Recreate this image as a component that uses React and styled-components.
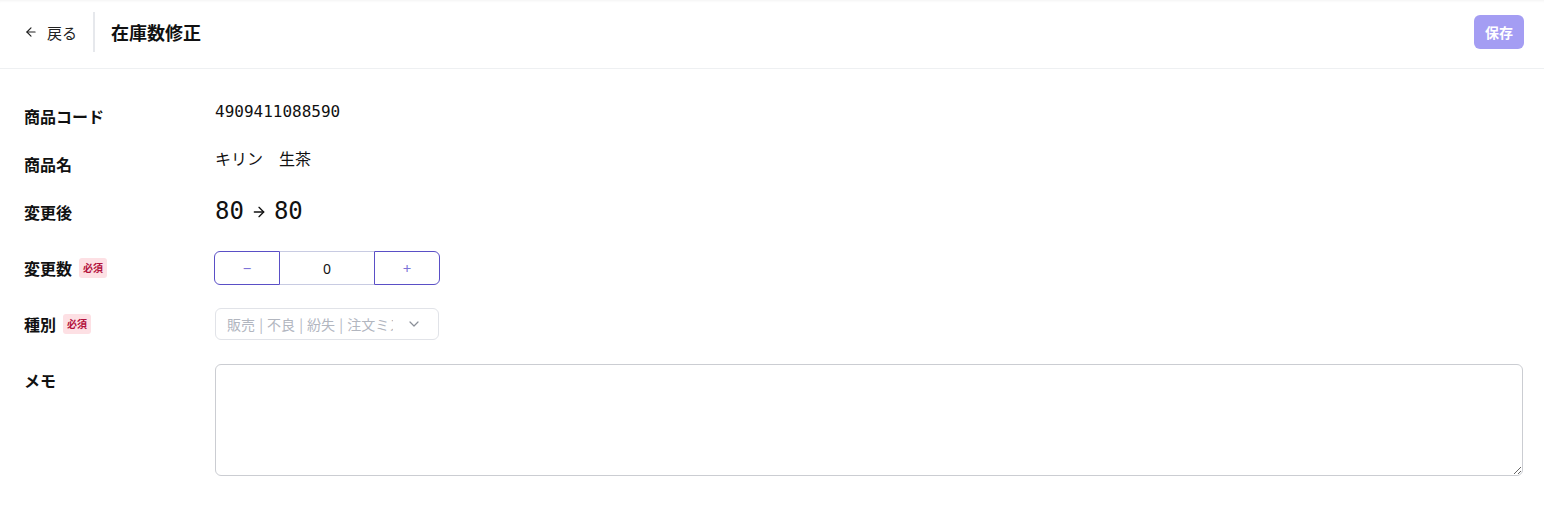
import React from "react";
import styled, { createGlobalStyle } from "styled-components";
import { ArrowLeft, ArrowRight, ChevronDown } from "lucide-react";

const GlobalStyle = createGlobalStyle`
  html, body {
    margin: 0;
    padding: 0;
    background: #ffffff;
    font-family: "Noto Sans", "Noto Sans CJK JP", sans-serif;
    color: #111111;
  }
`;

const Page = styled.div`
  width: 1544px;
  min-height: 525px;
  background: #fff;
`;

const Header = styled.header`
  height: 64px;
  display: flex;
  align-items: center;
  justify-content: space-between;
  padding: 0 20px 4px 24px;
  border-bottom: 1px solid #eef0f2;
  box-shadow: inset 0 3px 3px -2px rgba(0, 0, 0, 0.05);
`;

const HeaderLeft = styled.div`
  display: flex;
  align-items: center;
  height: 100%;
`;

const BackButton = styled.button`
  display: flex;
  align-items: center;
  gap: 9px;
  background: none;
  border: none;
  padding: 0;
  font-family: "Noto Sans CJK JP", sans-serif;
  font-size: 15px;
  color: #222;
  cursor: pointer;
`;

const Divider = styled.div`
  width: 2px;
  height: 40px;
  background: #e6e8ec;
  margin: 0 16px 0 16px;
`;

const Title = styled.h1`
  margin: 0;
  font-family: "Noto Sans CJK JP", sans-serif;
  font-size: 18px;
  font-weight: 700;
  color: #111;
`;

const SaveButton = styled.button`
  width: 50px;
  height: 34px;
  border: none;
  border-radius: 6px;
  background: #a49df3;
  color: #fff;
  font-family: "Noto Sans CJK JP", sans-serif;
  font-size: 14px;
  font-weight: 700;
  padding: 0;
`;

const Form = styled.div`
  display: flex;
  flex-direction: column;
  padding: 31px 21px 0 24px;
`;

const Row = styled.div`
  display: flex;
  align-items: flex-start;
  margin-top: ${(p) => p.$top || 0}px;
`;

const Label = styled.div`
  width: 191px;
  flex-shrink: 0;
  display: flex;
  align-items: center;
  gap: 7px;
  padding-top: ${(p) => p.$pad || 4}px;
  line-height: 24px;
  font-family: "Noto Sans CJK JP", sans-serif;
  font-size: 16px;
  font-weight: 700;
  color: #111;
`;

const Badge = styled.span`
  display: inline-flex;
  align-items: center;
  height: 20px;
  padding: 0 4px;
  border-radius: 3px;
  background: #fde0e4;
  color: #b3123d;
  font-size: 10px;
  font-weight: 700;
  line-height: 1;
`;

const Value = styled.div`
  font-family: "DejaVu Sans Mono", "Noto Sans CJK JP", monospace;
  font-size: ${(p) => p.$size || 16}px;
  line-height: ${(p) => p.$lh || 24}px;
  color: #111;
  display: flex;
  align-items: center;
  gap: ${(p) => p.$gap || 0}px;
`;

const Stepper = styled.div`
  display: flex;
  height: 34px;
  margin-left: -1px;
`;

const StepButton = styled.button`
  width: 66px;
  height: 34px;
  background: #fff;
  border: 1px solid #5a4fc6;
  border-radius: ${(p) => (p.$side === "left" ? "6px 0 0 6px" : "0 6px 6px 0")};
  color: #7d74d8;
  font-family: "Noto Sans", sans-serif;
  font-size: 15px;
  padding: 0;
`;

const CountInput = styled.input`
  width: 94px;
  height: 34px;
  box-sizing: border-box;
  border: 1px solid #c8cbe2;
  border-left: none;
  border-right: none;
  text-align: center;
  font-family: "Noto Sans", sans-serif;
  font-size: 14px;
  color: #111;
  outline: none;
  padding: 0;
`;

const Select = styled.div`
  width: 224px;
  height: 32px;
  box-sizing: border-box;
  border: 1px solid #e1e3e8;
  border-radius: 6px;
  display: flex;
  align-items: center;
  justify-content: space-between;
  padding: 0 16px 0 11px;
  overflow: hidden;
`;

const Placeholder = styled.span`
  width: 166px;
  overflow: hidden;
  white-space: nowrap;
  font-family: "Noto Sans CJK JP", sans-serif;
  font-size: 14px;
  word-spacing: 1px;
  color: #b2b6bf;
`;

const Memo = styled.textarea`
  flex: 1;
  height: 112px;
  box-sizing: border-box;
  border: 1px solid #cbcdd2;
  border-radius: 6px;
  font-family: "Noto Sans CJK JP", sans-serif;
  font-size: 14px;
  padding: 8px 12px;
  resize: vertical;
  outline: none;
`;

export default function App() {
  return (
    <>
      <GlobalStyle />
      <Page>
        <Header>
          <HeaderLeft>
            <BackButton>
              <ArrowLeft size={14} strokeWidth={2} />
              戻る
            </BackButton>
            <Divider />
            <Title>在庫数修正</Title>
          </HeaderLeft>
          <SaveButton disabled>保存</SaveButton>
        </Header>
        <Form>
          <Row>
            <Label>商品コード</Label>
            <Value>4909411088590</Value>
          </Row>
          <Row $top={20}>
            <Label>商品名</Label>
            <Value>キリン　生茶</Value>
          </Row>
          <Row $top={20}>
            <Label>変更後</Label>
            <Value $size={24} $lh={31} $gap={7}>
              <span>80</span>
              <ArrowRight size={16} strokeWidth={2} />
              <span>80</span>
            </Value>
          </Row>
          <Row $top={24}>
            <Label $pad={5}>
              変更数<Badge>必須</Badge>
            </Label>
            <Stepper>
              <StepButton $side="left">−</StepButton>
              <CountInput defaultValue="0" />
              <StepButton $side="right">+</StepButton>
            </Stepper>
          </Row>
          <Row $top={23}>
            <Label>
              種別<Badge>必須</Badge>
            </Label>
            <Select>
              <Placeholder>販売 | 不良 | 紛失 | 注文ミス</Placeholder>
              <ChevronDown size={16} color="#8a8f98" strokeWidth={1.8} />
            </Select>
          </Row>
          <Row $top={24}>
            <Label>メモ</Label>
            <Memo />
          </Row>
        </Form>
      </Page>
    </>
  );
}
